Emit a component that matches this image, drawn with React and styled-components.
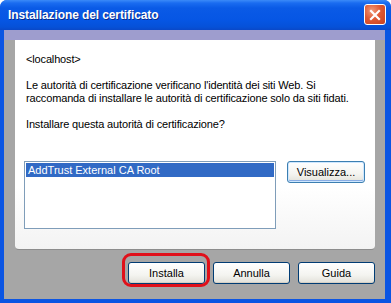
import React from "react";
import styled, { createGlobalStyle } from "styled-components";

const Global = createGlobalStyle`
  html, body { margin: 0; padding: 0; background: #ffffff; }
  body { font-family: "Liberation Sans", Arial, sans-serif; font-size: 11px; }
`;

const Window = styled.div`
  width: 391px;
  height: 303px;
  display: flex;
  flex-direction: column;
  border-radius: 7px 7px 0 0;
  overflow: hidden;
  background: #0b55e3;
`;

const TitleBar = styled.div`
  height: 30px;
  flex: none;
  display: flex;
  align-items: center;
  justify-content: space-between;
  padding: 0 5px 0 8px;
  box-sizing: border-box;
  background: linear-gradient(
    #3b8af8 0px,
    #1a6cf0 3px,
    #0a5ae6 8px,
    #0656e4 20px,
    #0651d8 27px,
    #0a48c8 30px
  );
`;

const Title = styled.span`
  color: #ffffff;
  font-family: "Liberation Sans", Arial, sans-serif;
  font-weight: bold;
  font-size: 12px;
  letter-spacing: -0.1px;
  text-shadow: 1px 1px 0 #0a2c8c;
`;

const CloseButton = styled.div`
  width: 22px;
  height: 21px;
  box-sizing: border-box;
  border: 1px solid #ffffff;
  border-radius: 3px;
  background: radial-gradient(circle at 35% 30%, #f09a7a 0%, #e05a35 45%, #c8411f 100%);
  display: flex;
  align-items: center;
  justify-content: center;
  margin-bottom: 1px;
`;

const Frame = styled.div`
  flex: 1;
  display: flex;
  flex-direction: column;
  margin: 0 6px 4px 4px;
  background: linear-gradient(#9e9dce 0 10px, #a6a6a6 10px);
`;

const Panel = styled.div`
  height: 210px;
  margin: 10px 10px 0 11px;
  box-sizing: border-box;
  padding: 13px 0 0 11px;
  background: linear-gradient(#ffffff 0 70%, #f3f3f3 100%);
  border-radius: 0 0 4px 4px;
  border-bottom: 1px solid #8c8c8c;
  color: #000000;
`;

const Text = styled.p`
  margin: 0 0 13px 0;
  line-height: 13px;
  font-size: 11px;
  letter-spacing: -0.15px;
`;

const ListRow = styled.div`
  display: flex;
  align-items: flex-start;
  gap: 11px;
  margin: 30px 0 0 -2px;
`;

const ListBox = styled.div`
  width: 252px;
  height: 68px;
  box-sizing: border-box;
  border: 1px solid #7f9db9;
  background: #ffffff;
  padding: 1px;
`;

const ListItem = styled.div`
  height: 14px;
  line-height: 14px;
  padding-left: 2px;
  font-size: 11px;
  color: ${(p) => (p.selected ? "#ffffff" : "#000000")};
  background: ${(p) => (p.selected ? "#316ac5" : "transparent")};
`;

const Button = styled.button`
  width: ${(p) => p.w || 77}px;
  height: 22px;
  box-sizing: border-box;
  padding: 0;
  border: 1px solid ${(p) => (p.hot ? "#3c7fb1" : "#003c74")};
  border-radius: 3px;
  font-family: "Liberation Sans", Arial, sans-serif;
  font-size: 11px;
  color: #000000;
  background: linear-gradient(#ffffff 0%, #f4f4f0 60%, #e2e1d9 100%);
  box-shadow: ${(p) =>
    p.hot
      ? "inset 0 0 0 1px #cee7ff, inset 0 -1px 0 1px #89ade4"
      : "inset 0 -1px 0 #d6d0c5"};
`;

const ButtonBar = styled.div`
  display: flex;
  justify-content: flex-end;
  gap: 8px;
  padding: 12px 10px 0 0;
`;

const Highlight = styled.div`
  position: relative;
  &::after {
    content: "";
    position: absolute;
    left: -6px;
    right: -5px;
    top: -9px;
    bottom: -3px;
    border: 3px solid #e0101a;
    border-radius: 9px;
    pointer-events: none;
  }
`;

export default function App() {
  return (
    <>
      <Global />
      <Window>
        <TitleBar>
          <Title>Installazione del certificato</Title>
          <CloseButton>
            <svg width="12" height="12" viewBox="0 0 12 12">
              <path d="M2 2 L10 10 M10 2 L2 10" stroke="#ffffff" strokeWidth="2.2" strokeLinecap="square" />
            </svg>
          </CloseButton>
        </TitleBar>
        <Frame>
          <Panel>
            <Text>&lt;localhost&gt;</Text>
            <Text>
              Le autorità di certificazione verificano l'identità dei siti Web. Si
              <br />
              raccomanda di installare le autorità di certificazione solo da siti fidati.
            </Text>
            <Text>Installare questa autorità di certificazione?</Text>
            <ListRow>
              <ListBox>
                <ListItem selected>AddTrust External CA Root</ListItem>
              </ListBox>
              <Button w={78} hot>Visualizza...</Button>
            </ListRow>
          </Panel>
          <ButtonBar>
            <Highlight>
              <Button>Installa</Button>
            </Highlight>
            <Button>Annulla</Button>
            <Button>Guida</Button>
          </ButtonBar>
        </Frame>
      </Window>
    </>
  );
}
